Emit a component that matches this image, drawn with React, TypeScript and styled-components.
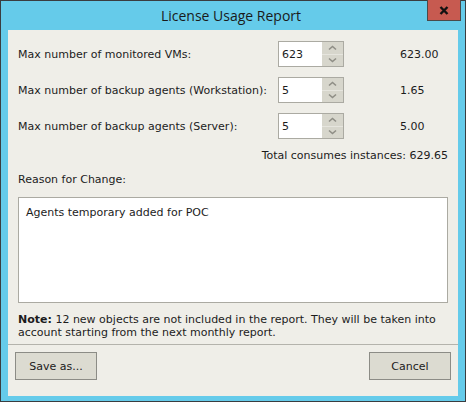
import React from "react";
import styled, { createGlobalStyle } from "styled-components";

const GlobalStyle = createGlobalStyle`
  html, body {
    margin: 0;
    padding: 0;
    background: #ffffff;
  }
  body {
    font-family: "DejaVu Sans", Verdana, sans-serif;
    font-size: 11px;
    color: #1c1c1c;
  }
`;

const Window = styled.div`
  box-sizing: border-box;
  width: 466px;
  height: 402px;
  border: 1px solid #3a3d40;
  background: #65cbea;
  display: flex;
  flex-direction: column;
`;

const TitleBar = styled.div`
  height: 29px;
  display: grid;
  grid-template-columns: 1fr auto 1fr;
  align-items: start;
  padding-right: 4px;
`;

const Title = styled.div`
  grid-column: 2;
  font-family: "Open Sans", "Noto Sans", sans-serif;
  font-size: 14px;
  line-height: 20px;
  padding-top: 5px;
  color: #1a1a1a;
`;

const CloseButton = styled.button`
  grid-column: 3;
  justify-self: end;
  margin-top: -1px;
  width: 34px;
  height: 21px;
  box-sizing: border-box;
  border: 1px solid #4a4a4a;
  border-top: none;
  background: #c75a50;
  display: flex;
  align-items: center;
  justify-content: center;
  padding: 0;
`;

const Content = styled.div`
  flex: 1;
  margin: 0 7px 5px;
  background: #efeee8;
  display: flex;
  flex-direction: column;
`;

const Body = styled.div`
  flex: 1;
  padding: 11px 10px 0;
  display: flex;
  flex-direction: column;
`;

const Grid = styled.div`
  display: grid;
  grid-template-columns: 260px 66px auto;
  grid-auto-rows: 26px;
  row-gap: 10px;
  align-items: center;
`;

const Label = styled.span`
  line-height: 13px;
  white-space: nowrap;
`;

const Value = styled(Label)`
  padding-left: 56px;
`;

const SpinBox = styled.div`
  box-sizing: border-box;
  height: 26px;
  border: 1px solid #abaaa2;
  display: flex;
  background: #ffffff;
`;

const SpinInput = styled.div`
  flex: 1;
  padding-left: 3px;
  display: flex;
  align-items: center;
`;

const SpinButtons = styled.div`
  width: 21px;
  display: flex;
  flex-direction: column;
  background: #d7d6cc;
`;

const SpinArrow = styled.div<{ $down?: boolean }>`
  flex: 1;
  display: flex;
  align-items: center;
  justify-content: center;
  border-top: ${(p) => (p.$down ? "1px solid #e6e5de" : "none")};
`;

const Total = styled.div`
  margin-top: 10px;
  text-align: right;
  line-height: 13px;
`;

const SectionLabel = styled.div`
  margin-top: 11px;
  line-height: 13px;
`;

const ReasonBox = styled.div`
  margin-top: 11px;
  box-sizing: border-box;
  height: 106px;
  border: 1px solid #abaaa2;
  background: #ffffff;
  padding: 8px 7px;
  line-height: 13px;
`;

const Note = styled.p`
  margin: 10px 0 0;
  line-height: 13px;
  b {
    font-weight: bold;
  }
`;

const Footer = styled.div`
  height: 44px;
  border-top: 1px solid #b4b3ac;
  padding: 7px 7px 0;
  display: flex;
  justify-content: space-between;
  align-items: flex-start;
`;

const DialogButton = styled.button`
  box-sizing: border-box;
  width: 82px;
  height: 28px;
  border: 1px solid #8c8c86;
  background: #dcdbd1;
  font-family: inherit;
  font-size: 11px;
  color: #1c1c1c;
  padding: 0;
`;

const Chevron = ({ down }: { down?: boolean }) => (
  <svg width="9" height="6" viewBox="0 0 9 6">
    <path
      d={down ? "M1 1.5 L4.5 4.5 L8 1.5" : "M1 4.5 L4.5 1.5 L8 4.5"}
      fill="none"
      stroke="#8f8e86"
      strokeWidth="1.6"
    />
  </svg>
);

const Spin = ({ value }: { value: string }) => (
  <SpinBox>
    <SpinInput>{value}</SpinInput>
    <SpinButtons>
      <SpinArrow>
        <Chevron />
      </SpinArrow>
      <SpinArrow $down>
        <Chevron down />
      </SpinArrow>
    </SpinButtons>
  </SpinBox>
);

const rows = [
  { label: "Max number of monitored VMs:", input: "623", value: "623.00" },
  { label: "Max number of backup agents (Workstation):", input: "5", value: "1.65" },
  { label: "Max number of backup agents (Server):", input: "5", value: "5.00" },
];

export default function App() {
  return (
    <>
      <GlobalStyle />
      <Window>
        <TitleBar>
          <Title>License Usage Report</Title>
          <CloseButton aria-label="Close">
            <svg width="10" height="9" viewBox="0 0 10 9">
              <path d="M1.5 1 L8.5 8 M8.5 1 L1.5 8" stroke="#111" strokeWidth="2.4" />
            </svg>
          </CloseButton>
        </TitleBar>
        <Content>
          <Body>
            <Grid>
              {rows.map((r) => (
                <React.Fragment key={r.label}>
                  <Label>{r.label}</Label>
                  <Spin value={r.input} />
                  <Value>{r.value}</Value>
                </React.Fragment>
              ))}
            </Grid>
            <Total>Total consumes instances: 629.65</Total>
            <SectionLabel>Reason for Change:</SectionLabel>
            <ReasonBox>Agents temporary added for POC</ReasonBox>
            <Note>
              <b>Note:</b> 12 new objects are not included in the report. They will be taken into
              account starting from the next monthly report.
            </Note>
          </Body>
          <Footer>
            <DialogButton>Save as...</DialogButton>
            <DialogButton>Cancel</DialogButton>
          </Footer>
        </Content>
      </Window>
    </>
  );
}
